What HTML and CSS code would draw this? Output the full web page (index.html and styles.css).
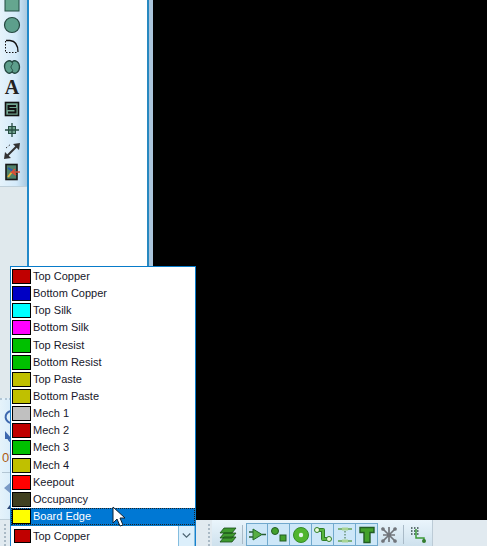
FILE: index.html
```
<!DOCTYPE html>
<html lang="en">
<head>
<meta charset="utf-8">
<title>PCB Layout</title>
<link rel="stylesheet" href="styles.css">
</head>
<body>
<div class="app">
  <div class="workspace">
    <aside class="rail">
      <div class="tools">
        <button class="tool" aria-label="Box"><svg viewBox="0 0 18 18"><rect x="2" y="2" width="14" height="14" fill="#65a68f" stroke="#234d42"/></svg></button>
        <button class="tool" aria-label="Circle"><svg viewBox="0 0 18 18"><circle cx="9" cy="9" r="7.5" fill="#5d9f8c" stroke="#244840" stroke-width="1.2"/></svg></button>
        <button class="tool" aria-label="Arc"><svg viewBox="0 0 18 18" fill="none" stroke="#111"><path d="M3 3.500H7C12 4 15 8 15 15" stroke-width="1.3"/><path d="M2.500 4v11.500H15" stroke-dasharray="1.500 1.500"/></svg></button>
        <button class="tool" aria-label="Path"><svg viewBox="0 0 18 18"><path d="M9 4C6 1 1 4 1.500 9S6 17 9 14C12 17 16.500 14 16.500 9S12 1 9 4Z" fill="#5d9f8c" stroke="#244840" stroke-width="1.300"/><path d="M9 4C11 6 8 7 8 9S11 12 9 14" fill="none" stroke="#244840"/></svg></button>
        <button class="tool letter" aria-label="Text">A</button>
        <button class="tool" aria-label="Symbol"><svg viewBox="0 0 18 18"><rect x="2.500" y="2.500" width="13" height="13" fill="#72a590" stroke="#111" stroke-width="1.600"/><path d="M13 6H5.500v3h7v3.500H5" fill="none" stroke="#111" stroke-width="2"/></svg></button>
        <button class="tool" aria-label="Marker"><svg viewBox="0 0 18 18"><rect x="5.500" y="5.500" width="7" height="7" fill="#72a590" stroke="#264c42"/><path d="M9 2v14M2 9h14" stroke="#264c42" stroke-width="1.300"/></svg></button>
        <button class="tool" aria-label="Dimension"><svg viewBox="0 0 18 18"><path d="M4 14L14 4" stroke="#333" stroke-width="2"/><path d="M17 1l-1 7-6-6ZM1 17l1-7 6 6Z" fill="#333"/><path d="M3 6l5-4" stroke="#333" stroke-dasharray="1.500 2"/></svg></button>
        <button class="tool" aria-label="Zone"><svg viewBox="0 0 18 18"><rect x="3" y="1.500" width="11" height="15" fill="#4f8069" stroke="#171717" stroke-width="1.600"/><path d="M5 5l5 3-2 2" fill="none" stroke="#295dae" stroke-width="2"/><path d="M5 14l4-5" stroke="#e5b637" stroke-width="2"/><path d="M17 9H9l3-3M9 9l4 3" fill="none" stroke="#dd4c36" stroke-width="1.600"/></svg></button>
      </div>
      <div class="tools rotate-tools">
        <button class="tool" aria-label="Rotate clockwise"><svg viewBox="0 0 18 18"><path d="M13 4A6 6 0 1 0 14 13" fill="none" stroke="#3c67ae" stroke-width="2"/></svg></button>
        <button class="tool" aria-label="Rotate anti-clockwise"><svg viewBox="0 0 18 18"><path d="M3 2v8h7ZM5 8q1 6 8 7" fill="#3c67ae"/></svg></button>
        <output class="angle">0°</output>
        <button class="tool" aria-label="Mirror horizontally"><svg viewBox="0 0 18 18"><path d="M8 4v10L2 9ZM8 7h6v4H8Z" fill="#7b9ac6"/></svg></button>
        <button class="tool" aria-label="Mirror vertically"><svg viewBox="0 0 18 18"><path d="M5 9l5-7 5 7ZM8 9h4v7H8Z" fill="#2d4878"/></svg></button>
      </div>
    </aside>
    <section class="panel"></section>
    <main class="canvas"></main>
  </div>
  <footer class="bar">
    <span class="grip start"></span>
    <div class="layer">
      <ul class="options" role="listbox" aria-label="Layers">
        <li role="option"><i class="swatch red"></i>Top Copper</li>
        <li role="option"><i class="swatch blue"></i>Bottom Copper</li>
        <li role="option"><i class="swatch cyan"></i>Top Silk</li>
        <li role="option"><i class="swatch magenta"></i>Bottom Silk</li>
        <li role="option"><i class="swatch green"></i>Top Resist</li>
        <li role="option"><i class="swatch green"></i>Bottom Resist</li>
        <li role="option"><i class="swatch olive"></i>Top Paste</li>
        <li role="option"><i class="swatch olive"></i>Bottom Paste</li>
        <li role="option"><i class="swatch silver"></i>Mech 1</li>
        <li role="option"><i class="swatch red"></i>Mech 2</li>
        <li role="option"><i class="swatch green"></i>Mech 3</li>
        <li role="option"><i class="swatch olive"></i>Mech 4</li>
        <li role="option"><i class="swatch bright"></i>Keepout</li>
        <li role="option"><i class="swatch dark"></i>Occupancy</li>
        <li role="option" class="active" aria-selected="true"><i class="swatch yellow"></i>Board Edge</li>
      </ul>
      <i class="swatch red current"></i>
      <select class="select" aria-label="Layer"><option>Top Copper</option></select>
      <span class="arrow"><svg viewBox="0 0 16 18"><path d="M4 8l4 4 4-4" fill="none" stroke="#4c6472" stroke-width="1.200"/></svg></span>
      <svg class="cursor" viewBox="0 0 14 22"><path d="M1 1v16l4-4 3 7 3-1-3-7h5Z" fill="#fff" stroke="#123" stroke-width="1"/></svg>
    </div>
    <span class="grip"></span>
    <div class="filters">
      <button class="filter" aria-label="Layers"><svg viewBox="0 0 20 20" fill="#3f9a30" stroke="#174c16" stroke-width=".8"><path d="M2 17l4-5h12l-4 5ZM2 13l4-5h12l-4 5ZM2 8l4-5h12l-4 5Z"/></svg></button>
      <span class="divider"></span>
      <button class="filter on" aria-label="Components"><svg viewBox="0 0 20 20"><path d="M2 7h5M2 12h5M15 9.500h4" stroke="#285b36" stroke-width="1.300"/><path d="M6 4l9 5.500L6 15Z" fill="#58ad43" stroke="#256b2b"/></svg></button>
      <button class="filter on" aria-label="Graphics"><svg viewBox="0 0 20 20" fill="#43a12c" stroke="#225c24"><circle cx="6" cy="6" r="3.500"/><rect x="11" y="10" width="6" height="6"/></svg></button>
      <button class="filter on" aria-label="Pads"><svg viewBox="0 0 20 20"><circle cx="10" cy="10" r="7.500" fill="#51b52e" stroke="#348a28"/><circle cx="10" cy="10" r="2.200" fill="#e6f6eb"/></svg></button>
      <button class="filter on" aria-label="Tracks"><svg viewBox="0 0 20 20"><path d="M4 5h6v9h6" fill="none" stroke="#2f7d25" stroke-width="4" stroke-linejoin="round"/><path d="M4 5h6v9h6" fill="none" stroke="#58b53d" stroke-width="2"/><circle cx="4" cy="5" r="2.500" fill="#e9f9d8" stroke="#328028"/><circle cx="16" cy="14" r="2.500" fill="#e9f9d8" stroke="#328028"/></svg></button>
      <button class="filter on" aria-label="Connections"><svg viewBox="0 0 20 20"><path d="M3 4h14M3 16h14" stroke="#64a455" stroke-width="1.600"/><path d="M7 4h6M7 16h6" stroke="#a8d493" stroke-width="3"/><path d="M10 6v9" stroke="#37693b" stroke-dasharray="1.500 1.500"/></svg></button>
      <button class="filter on" aria-label="Text objects"><svg viewBox="0 0 20 20"><path d="M3 2.500h14v5h-4v10H7v-10H3Z" fill="#43a12c" stroke="#235c24" stroke-width="1.400"/></svg></button>
      <button class="filter" aria-label="Ratsnest"><svg viewBox="0 0 20 20" fill="none" stroke="#71757b" stroke-width="1.700"><path d="M10 2v15M3 3l14 14M17 3L3 17M4 10h12"/><circle cx="4" cy="4" r="1"/><circle cx="16" cy="4" r="1"/><circle cx="4" cy="16" r="1"/><circle cx="16" cy="16" r="1"/></svg></button>
      <span class="divider"></span>
      <button class="filter" aria-label="Auto track"><svg viewBox="0 0 20 20"><path d="M3 3h9M3 6h9M3 9h9" stroke="#334c47" stroke-width="1.500" stroke-dasharray="1.500 1.500"/><path d="M8 4v9h8v3" fill="none" stroke="#3c9b37" stroke-width="1.500"/><circle cx="16" cy="16" r="2" fill="#327c2d"/></svg></button>
    </div>
  </footer>
</div>
</body>
</html>
```
FILE: styles.css
```
* { box-sizing: border-box; }
body { margin: 0; font: 12px/16px "Liberation Sans", Arial, sans-serif; font-size: 11px; color: #17172b; background: #e3ebef; }
button { padding: 0; border: 0; background: none; color: inherit; }
svg { display: block; }
.app { display: flex; flex-direction: column; height: 100vh; overflow: hidden; }
.workspace { flex: 1; min-height: 0; display: grid; grid-template-columns: 27px 126px 1fr; }
.rail { display: flex; flex-direction: column; justify-content: space-between; min-height: 0; overflow: hidden; background: #e0e9ed; }
.tools { display: flex; flex-direction: column; align-items: flex-start; padding-left: 3px; background: linear-gradient(90deg, #e5f3fb, #d4eafa 60%, #a9c9df); border-bottom: 1px solid #bfd0da; }
.tools:first-child { margin-top: -7px; padding-bottom: 4px; }
.tool { width: 18px; height: 21px; display: grid; place-items: center; }
.tool svg { width: 18px; height: 18px; }
.letter { font: bold 20px/21px "Liberation Serif", serif; color: #222; }
.rotate-tools { border-top: 2px dotted #b3c6d4; padding-top: 6px; padding-left: 2px; }
.angle { font-size: 13px; line-height: 20px; color: #ad5b13; border-bottom: 1px solid #b3c6d4; padding-bottom: 4px; margin-bottom: 4px; }
.panel { background: #fff; border-left: 2px solid #2389c9; border-right: 4px solid #abc5dc; box-shadow: inset -2px 0 #2788c0; }
.canvas { background: #000; }
.bar { height: 26px; flex: none; display: flex; background: #e1eaf0; }
.layer { position: relative; width: 186px; height: 22px; margin-top: 5px; flex: none; }
.select { appearance: none; width: 100%; height: 22px; border: 1px solid #1681cf; border-radius: 0; padding: 0 20px 0 22px; background: #fff; font: inherit; color: inherit; }
.arrow { position: absolute; right: 1px; top: 0; width: 17px; height: 22px; border: 1px solid #84bddf; background: #dceffb; pointer-events: none; }
.swatch { width: 19px; height: 15px; flex: none; border: 1px solid #000; }
.current { position: absolute; left: 4px; top: 4px; width: 17px; height: 14px; }
.options { position: absolute; left: 0; right: 0; bottom: 21px; height: 260px; margin: 0; padding: 1px 0 0; list-style: none; display: grid; grid-auto-rows: 1fr; background: #fff; border: 1px solid #087bc9; z-index: 1; }
.options li { display: flex; align-items: center; gap: 2px; padding: 1px; line-height: 15px; }
.options .active { background: #0078d4; color: #fff; outline: 1px dotted #222; outline-offset: -1px; }
.cursor { position: absolute; z-index: 2; left: 102px; top: -19px; width: 14px; height: 22px; }
.red { background: #c00000; }
.blue { background: #0000c4; }
.cyan { background: #00ffff; }
.magenta { background: #ff00ff; }
.green { background: #00c000; }
.olive { background: #c0c000; }
.silver { background: #c0c0c0; }
.bright { background: #ff0000; }
.dark { background: #404020; }
.yellow { background: #ffff00; }
.grip { flex: none; margin: 4px 0 0 12px; border-left: 2px dotted #a9b9c5; }
.start { margin: 4px 4px 0; }
.filters { display: flex; align-items: flex-start; margin-left: 2px; padding: 3px 3px 0 5px; background: linear-gradient(#eaf5fc, #cee1ed); border-right: 1px solid #bccbd6; }
.filter { width: 22px; height: 23px; display: grid; place-items: center; }
.filter svg { width: 20px; height: 20px; }
.on { border: 1px solid #71a9cd; border-left-width: 0; background: #cde7f8; }
.divider + .on { border-left-width: 1px; }
.divider { width: 1px; height: 19px; margin: 2px 3px; background: #a9bac7; }
```
